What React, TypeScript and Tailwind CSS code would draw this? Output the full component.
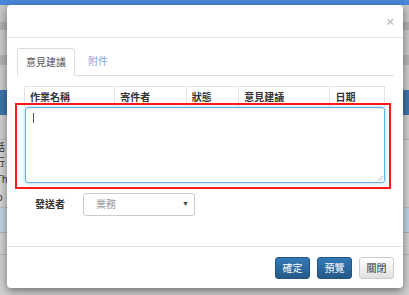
import React from "react";

const font = { fontFamily: '"Liberation Sans", "Noto Sans CJK TC", sans-serif' };

const columns = [
  { label: "作業名稱", w: "w-[91px]" },
  { label: "寄件者", w: "w-[72px]" },
  { label: "狀態", w: "w-[53px]" },
  { label: "意見建議", w: "w-[92px]" },
  { label: "日期", w: "w-[54px]" },
];

function Backdrop() {
  return (
    <div className="flex flex-col w-full h-full text-[10px] text-[#333]">
      <div className="h-[5px] bg-[#4a85d8]" />
      <div className="h-[17px] bg-[#c6c6c6]" />
      <div className="h-[8px] bg-[#afafaf]" />
      <div className="h-[25px] bg-[#c9c9c9]" />
      <div className="h-[10px] bg-[#b4b4b4]" />
      <div className="h-[25px] bg-[#cbcbcb]" />
      <div className="h-[25px] bg-[#3e74aa]" />
      <div className="h-[25px] bg-[#cecece] border-b border-[#b8b8b8]" />
      <div className="h-[15px] bg-[#d3d3d3] flex items-center">
        <span className="-ml-[5px]">話</span>
      </div>
      <div className="h-[15px] bg-[#d3d3d3] flex items-center">
        <span className="-ml-[5px]">行</span>
      </div>
      <div className="h-[18px] bg-[#d3d3d3] flex items-center">
        <span className="-ml-[4px]">Th</span>
      </div>
      <div className="h-[20px] bg-[#d3d3d3] flex items-center border-b border-[#bcbcbc]">
        <span className="-ml-[3px]">o</span>
      </div>
      <div className="h-[25px] bg-[#bfd2e2] border-b border-[#b0b0b0]" />
      <div className="h-[22px] bg-[#d0d0d0] border-b border-[#b5b5b5]" />
      <div className="flex-1 bg-[#cfcfcf]" />
    </div>
  );
}

export default function App() {
  return (
    <div className="relative w-[409px] h-[295px] overflow-hidden bg-[#c8c8c8]" style={font}>
      <Backdrop />

      <div className="absolute left-[7px] top-[5px] w-[396px] h-[283px] bg-white rounded-[4px] shadow-[0_3px_9px_rgba(0,0,0,0.45)] flex flex-col text-[10px] text-[#333]">
        <div className="h-[33px] border-b border-[#e5e5e5] flex items-center justify-end pr-[9px] shrink-0">
          <span className="text-[13px] font-bold leading-none text-[#c4c4c4]">×</span>
        </div>

        <div className="flex flex-col px-[10px] pt-[11px] flex-1">
          <div className="flex items-end border-b border-[#ddd] h-[27px] mr-[-1px]">
            <div className="h-[28px] w-[58px] -mb-px border border-[#ddd] border-b-white rounded-t-[3px] bg-white flex items-center justify-center text-[#555]">
              意見建議
            </div>
            <div className="h-[27px] px-[13px] flex items-center text-[#7fa9d6]">附件</div>
          </div>

          <div className="flex flex-col pl-[7px] pr-[8px] pt-[10px]">
            <div className="flex h-[21px] border border-b-0 border-[#e4e4e4] font-bold text-[#333]">
              {columns.map((c, i) => (
                <div
                  key={c.label}
                  className={`${c.w} flex items-center pl-[5px] ${i < columns.length - 1 ? "border-r border-[#e4e4e4]" : ""}`}
                >
                  {c.label}
                </div>
              ))}
            </div>

            <div className="relative h-[76px] -mx-[0px] ml-px border border-[#66afe9] rounded-[3px] bg-white shadow-[inset_0_1px_1px_rgba(0,0,0,0.075),0_0_4px_rgba(102,175,233,0.6)]">
              <div className="absolute left-[7px] top-[5px] w-px h-[10px] bg-[#555]" />
              <svg className="absolute right-[1px] bottom-[1px]" width="6" height="6" viewBox="0 0 6 6">
                <path d="M5.5 1 L1 5.5 M5.5 3.5 L3.5 5.5" stroke="#999" strokeWidth="0.8" />
              </svg>
            </div>
          </div>

          <div className="flex items-center pt-[10px]">
            <div className="w-[66px] pl-[18px] font-bold text-[#333]">發送者</div>
            <div className="w-[112px] h-[23px] border border-[#ccc] rounded-[3px] flex items-center justify-between pl-[12px] pr-[5px] text-[#999]">
              <span>業務</span>
              <span className="text-[7px] text-[#444]">▼</span>
            </div>
          </div>
        </div>

        <div className="h-[42px] shrink-0 border-t border-[#e5e5e5] flex items-start justify-end gap-[7px] pt-[10px] pr-[9px]">
          <button className="w-[35px] h-[22px] rounded-[3px] border border-[#245580] bg-[linear-gradient(#337ab7,#265a88)] text-white text-[10px]">
            確定
          </button>
          <button className="w-[35px] h-[22px] rounded-[3px] border border-[#245580] bg-[linear-gradient(#337ab7,#265a88)] text-white text-[10px]">
            預覽
          </button>
          <button className="w-[35px] h-[22px] rounded-[3px] border border-[#ccc] bg-[linear-gradient(#fff,#e0e0e0)] text-[#333] text-[10px]">
            關閉
          </button>
        </div>
      </div>

      <div className="absolute left-[15px] top-[103px] w-[376px] h-[86px] border-2 border-[#ff1a1a] pointer-events-none" />
    </div>
  );
}
